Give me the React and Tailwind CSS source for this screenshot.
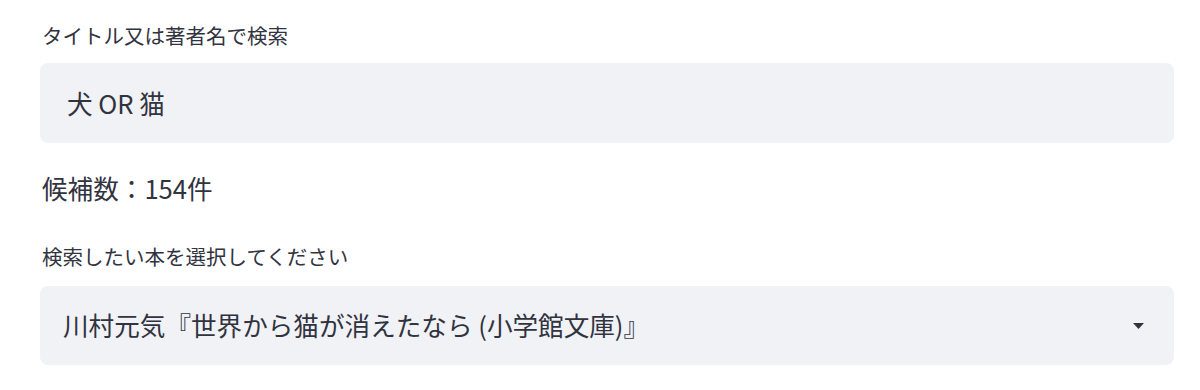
const font = { fontFamily: '"Noto Sans CJK JP", "Noto Sans", sans-serif' };

const App = () => {
  return (
    <div className="w-[1200px] h-[390px] bg-white text-[#31333f] pl-[40px] pr-[26px] pt-[23px]" style={font}>
      <div className="text-[20.5px] leading-[24px] pl-[2px]">タイトル又は著者名で検索</div>
      <div className="mt-[16px] h-[80px] rounded-[8px] bg-[#f0f2f6] flex items-center pl-[27px] text-[25.6px]">
        犬 OR 猫
      </div>

      <div className="mt-[29px] text-[25.6px] leading-[32px] pl-[2px]">候補数：154件</div>

      <div className="mt-[40px] text-[20.5px] leading-[24px] pl-[2px]">検索したい本を選択してください</div>
      <div className="mt-[18px] h-[79px] rounded-[8px] bg-[#f0f2f6] flex items-center justify-between pl-[23px] pr-[30px] text-[25.6px]">
        <span>川村元気『世界から猫が消えたなら (小学館文庫)』</span>
        <svg width="11" height="6" viewBox="0 0 11 6">
          <path d="M0 0 L11 0 L5.5 6 Z" fill="#31333f" />
        </svg>
      </div>
    </div>
  );
};

export default App;
